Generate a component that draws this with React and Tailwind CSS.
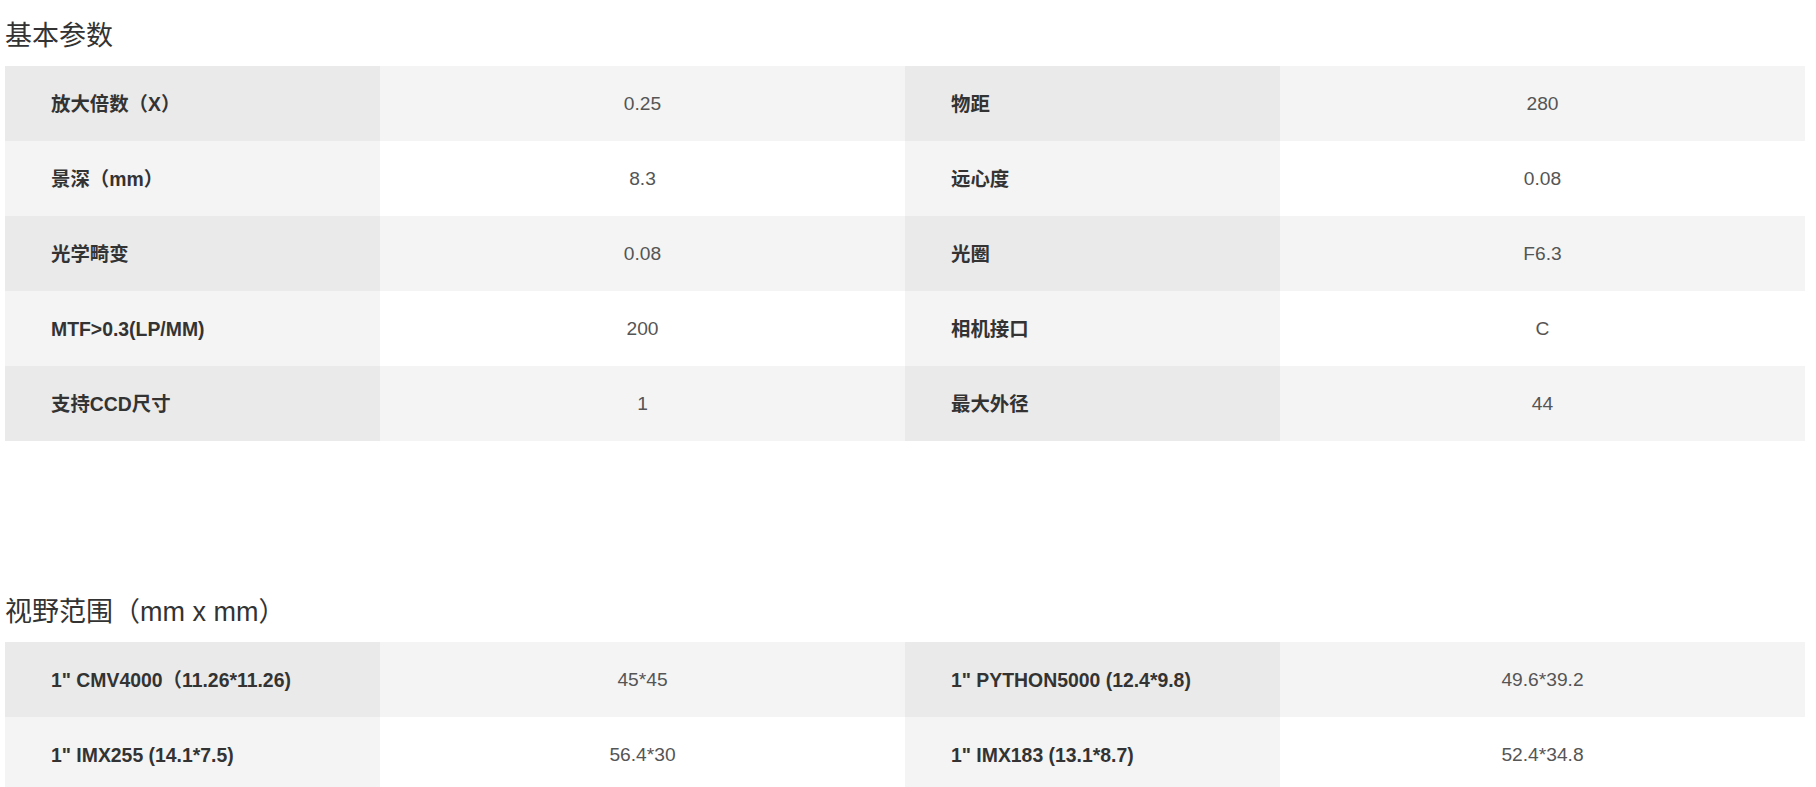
const basicParams = [
  ['放大倍数（X）', '0.25', '物距', '280'],
  ['景深（mm）', '8.3', '远心度', '0.08'],
  ['光学畸变', '0.08', '光圈', 'F6.3'],
  ['MTF>0.3(LP/MM)', '200', '相机接口', 'C'],
  ['支持CCD尺寸', '1', '最大外径', '44'],
]

const fieldOfView = [
  ['1" CMV4000（11.26*11.26)', '45*45', '1" PYTHON5000 (12.4*9.8)', '49.6*39.2'],
  ['1" IMX255 (14.1*7.5)', '56.4*30', '1" IMX183 (13.1*8.7)', '52.4*34.8'],
]

function SpecTable({ rows }) {
  return (
    <div className="w-[1800px]">
      {rows.map((row, i) => {
        const odd = i % 2 === 0
        const labelBg = odd ? 'bg-[#eaeaea]' : 'bg-[#f4f4f4]'
        const valueBg = odd ? 'bg-[#f4f4f4]' : 'bg-white'
        return (
          <div key={i} className="grid h-[75px] grid-cols-[375px_525px_375px_525px]">
            <div className={`flex items-center pt-[2px] pl-[46px] text-[19.4px] font-bold text-[#333] ${labelBg}`}>{row[0]}</div>
            <div className={`flex items-center justify-center pt-[2px] text-[19.2px] text-[#555] ${valueBg}`}>{row[1]}</div>
            <div className={`flex items-center pt-[2px] pl-[46px] text-[19.4px] font-bold text-[#333] ${labelBg}`}>{row[2]}</div>
            <div className={`flex items-center justify-center pt-[2px] text-[19.2px] text-[#555] ${valueBg}`}>{row[3]}</div>
          </div>
        )
      })}
    </div>
  )
}

export default function App() {
  return (
    <div
      className="min-h-screen bg-white px-[5px]"
      style={{ fontFamily: '"Liberation Sans", Arial, "Noto Sans CJK SC", sans-serif' }}
    >
      <h2 className="pt-[16px] pb-[10px] text-[27px] leading-[40px] font-normal text-[#333]">基本参数</h2>
      <SpecTable rows={basicParams} />

      <h2 className="mt-[151px] pb-[10px] text-[27px] leading-[40px] font-normal text-[#333]">视野范围（mm x mm）</h2>
      <SpecTable rows={fieldOfView} />
    </div>
  )
}
